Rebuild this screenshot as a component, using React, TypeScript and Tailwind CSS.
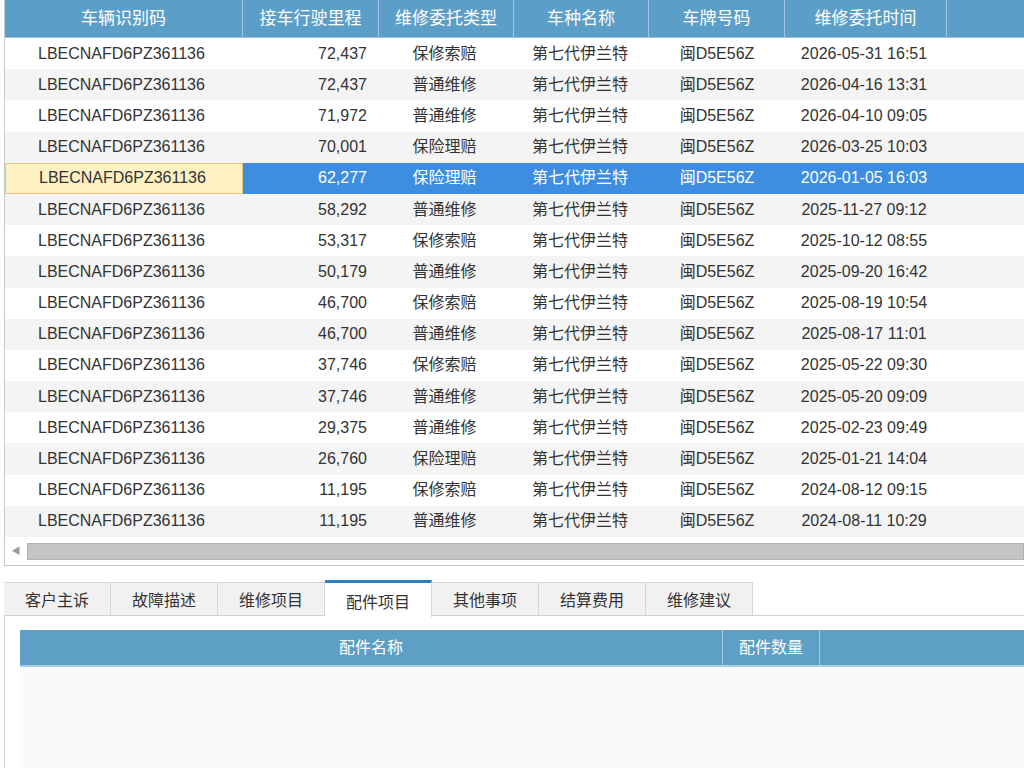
import React from "react";

const rows: [string, string, string][] = [
  ["72,437", "保修索赔", "2026-05-31 16:51"],
  ["72,437", "普通维修", "2026-04-16 13:31"],
  ["71,972", "普通维修", "2026-04-10 09:05"],
  ["70,001", "保险理赔", "2026-03-25 10:03"],
  ["62,277", "保险理赔", "2026-01-05 16:03"],
  ["58,292", "普通维修", "2025-11-27 09:12"],
  ["53,317", "保修索赔", "2025-10-12 08:55"],
  ["50,179", "普通维修", "2025-09-20 16:42"],
  ["46,700", "保修索赔", "2025-08-19 10:54"],
  ["46,700", "普通维修", "2025-08-17 11:01"],
  ["37,746", "保修索赔", "2025-05-22 09:30"],
  ["37,746", "普通维修", "2025-05-20 09:09"],
  ["29,375", "普通维修", "2025-02-23 09:49"],
  ["26,760", "保险理赔", "2025-01-21 14:04"],
  ["11,195", "保修索赔", "2024-08-12 09:15"],
  ["11,195", "普通维修", "2024-08-11 10:29"],
];

const tabs = ["客户主诉", "故障描述", "维修项目", "配件项目", "其他事项", "结算费用", "维修建议"];

const font = { fontFamily: '"Liberation Sans", "Noto Sans CJK SC", sans-serif' };

export default function App() {
  return (
    <div className="w-[1024px] h-[768px] overflow-hidden bg-white text-[#333]" style={font}>
      {/* Top grid */}
      <div className="ml-[4px] h-[566px] border-l border-b border-[#c8c8c8] flex flex-col">
        <div className="flex h-[38px] bg-[#5b9ec8] text-white text-[17px] border-b border-[#9cc3dd]">
          <div className="w-[238px] flex items-center justify-center border-r border-[#9cc6e4]">车辆识别码</div>
          <div className="w-[136px] flex items-center justify-center border-r border-[#9cc6e4]">接车行驶里程</div>
          <div className="w-[135px] flex items-center justify-center border-r border-[#9cc6e4]">维修委托类型</div>
          <div className="w-[135px] flex items-center justify-center border-r border-[#9cc6e4]">车种名称</div>
          <div className="w-[136px] flex items-center justify-center border-r border-[#9cc6e4]">车牌号码</div>
          <div className="w-[162px] flex items-center justify-center border-r border-[#9cc6e4]">维修委托时间</div>
          <div className="flex-1" />
        </div>
        <div className="flex flex-col">
          {rows.map((r, i) => {
            const sel = i === 4;
            const bg = sel ? "bg-[#3d8ee0] text-white" : i % 2 === 1 ? "bg-[#f4f4f4]" : "bg-white";
            return (
              <div key={i} className={`flex h-[31.2px] text-[16px] ${bg}`}>
                <div
                  className={`w-[238px] flex items-center pl-[33px] ${
                    sel ? "bg-[#fdf0c2] text-[#333] border border-[#e9c77a]" : ""
                  }`}
                >
                  LBECNAFD6PZ361136
                </div>
                <div className="w-[136px] flex items-center justify-end pr-[12px]">{r[0]}</div>
                <div className="w-[135px] flex items-center justify-center pr-[4px]">{r[1]}</div>
                <div className="w-[135px] flex items-center justify-center pr-[3px]">第七代伊兰特</div>
                <div className="w-[136px] flex items-center justify-center">闽D5E56Z</div>
                <div className="w-[162px] flex items-center justify-center pr-[4px]">{r[2]}</div>
                <div className="flex-1" />
              </div>
            );
          })}
        </div>
        <div className="mt-auto mb-[4px] h-[19px] flex items-center">
          <div className="w-[22px] flex items-center justify-center text-[#999] text-[9px]">◀</div>
          <div className="flex-1 h-[17px] bg-[#c4c4c4] border border-[#b3b3b3]" />
        </div>
      </div>

      {/* Tabs */}
      <div className="mt-[14px] ml-[4px] flex h-[36px] border-b border-[#cfcfcf]">
        {tabs.map((t, i) => {
          const active = i === 3;
          return (
            <div
              key={t}
              className={`w-[107px] flex items-center justify-center text-[16px] border-r border-l-0 ${
                i === 0 ? "border-l" : ""
              } border-[#d6d6d6] ${
                active
                  ? "bg-white border-t-[3px] border-t-[#2a7fc9] -mb-px pt-[5px] h-[37px]"
                  : "bg-[#f1f1f1] border-t mt-[2px] pt-[4px]"
              }`}
            >
              {t}
            </div>
          );
        })}
        <div className="flex-1" />
      </div>

      {/* Bottom panel */}
      <div className="ml-[4px] border-l border-[#d0d0d0] h-[200px] pl-[15px] pt-[14px]">
        <div className="flex h-[37px] bg-[#5e9fc6] text-white text-[16px] border-b-2 border-[#a9cde6]">
          <div className="w-[703px] flex items-center justify-center border-r border-[#a7cbe3]">配件名称</div>
          <div className="w-[97px] flex items-center justify-center border-r border-[#a7cbe3]">配件数量</div>
          <div className="flex-1" />
        </div>
        <div className="h-[120px] bg-[#f9fafb]" />
      </div>
    </div>
  );
}
